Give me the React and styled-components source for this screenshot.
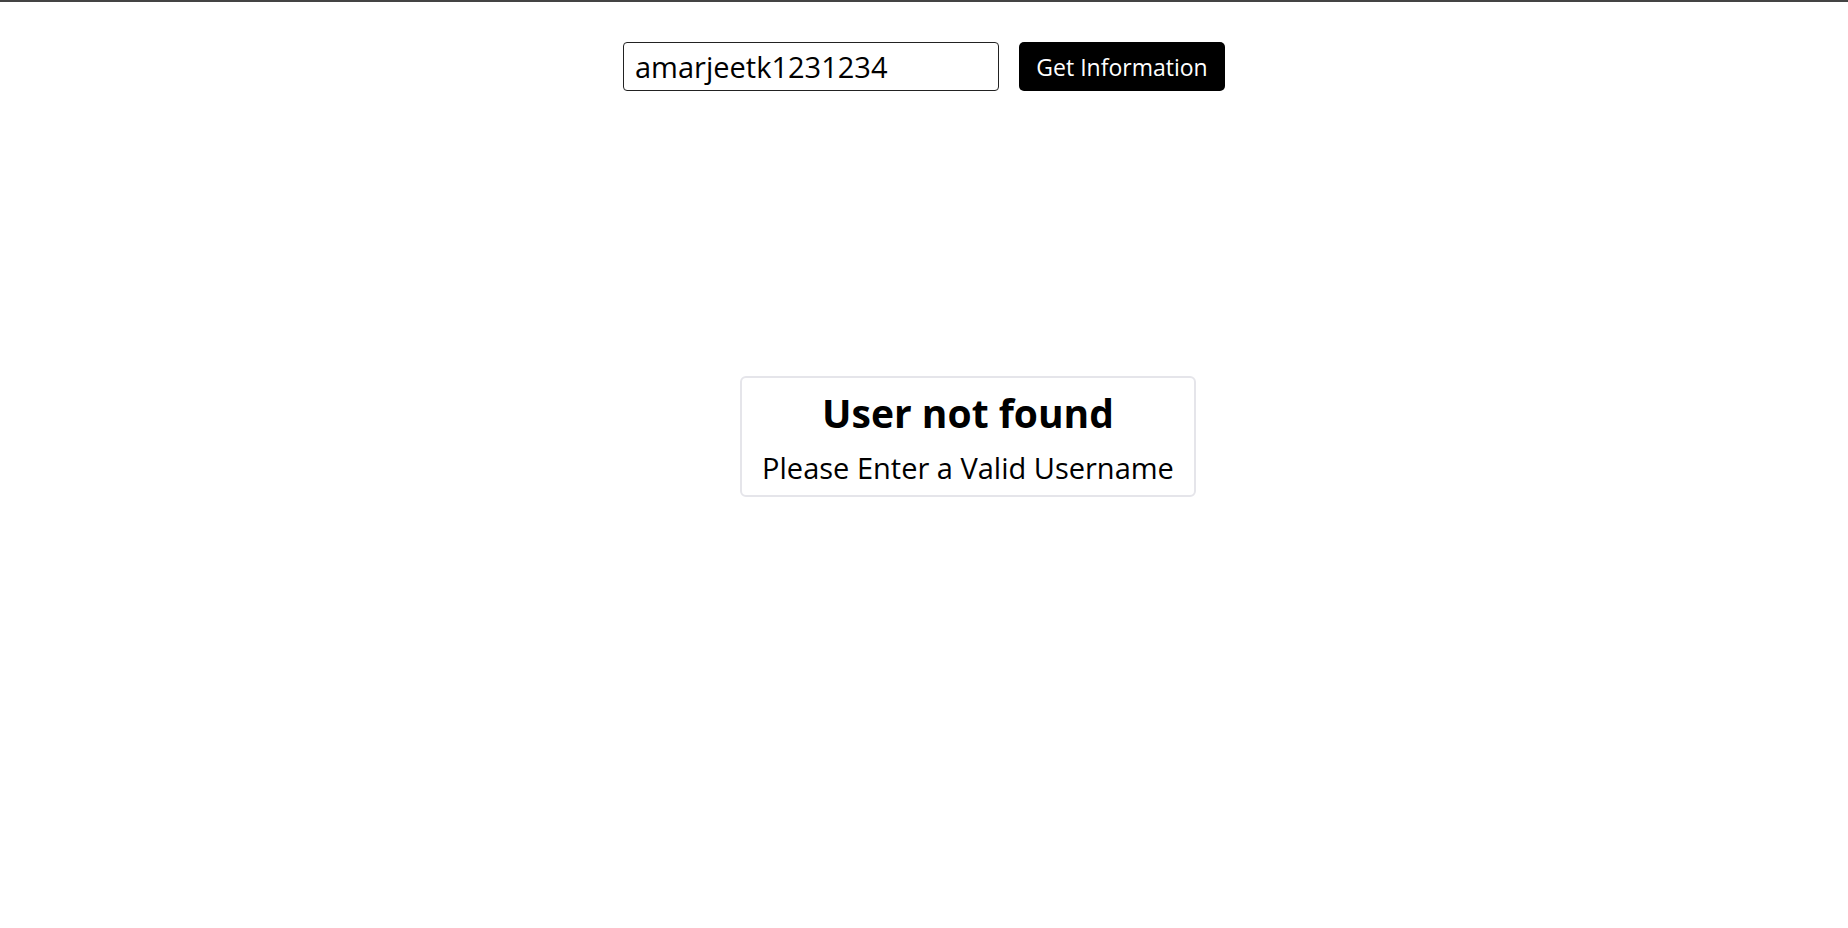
import React from "react";
import styled, { createGlobalStyle } from "styled-components";

const Global = createGlobalStyle`
  html, body { margin: 0; padding: 0; background: #fff; }
  body { font-family: "Open Sans", "Noto Sans", sans-serif; color: #000; }
`;

const Page = styled.div`
  min-height: 928px;
  box-sizing: border-box;
  border-top: 2px solid #444;
  display: flex;
  flex-direction: column;
  align-items: center;
`;

const Form = styled.form`
  display: flex;
  align-items: center;
  gap: 20px;
  margin-top: 40px;
`;

const Input = styled.input`
  box-sizing: border-box;
  width: 376px;
  height: 49px;
  border: 1px solid #222;
  border-radius: 4px;
  padding: 0 11px;
  font-family: inherit;
  font-size: 29px;
  color: #000;
  outline: none;
`;

const Button = styled.button`
  box-sizing: border-box;
  width: 206px;
  height: 49px;
  padding: 0;
  border: none;
  border-radius: 5px;
  background: #000;
  color: #fff;
  font-family: inherit;
  font-size: 23px;
  cursor: pointer;
`;

const CardRow = styled.div`
  margin-top: 285px;
  padding-left: 88px;
`;

const Card = styled.div`
  box-sizing: border-box;
  width: 456px;
  border: 2px solid #e5e5ea;
  border-radius: 6px;
  padding: 11px 0 9px;
  display: flex;
  flex-direction: column;
  align-items: center;
  gap: 13px;
`;

const Title = styled.h2`
  margin: 0;
  font-size: 39px;
  font-weight: 700;
  line-height: 48px;
`;

const Subtitle = styled.p`
  margin: 0;
  font-size: 29px;
  line-height: 36px;
`;

export default function App() {
  return (
    <>
      <Global />
      <Page>
        <Form onSubmit={(e) => e.preventDefault()}>
          <Input defaultValue="amarjeetk1231234" />
          <Button type="submit">Get Information</Button>
        </Form>
        <CardRow>
          <Card>
            <Title>User not found</Title>
            <Subtitle>Please Enter a Valid Username</Subtitle>
          </Card>
        </CardRow>
      </Page>
    </>
  );
}
